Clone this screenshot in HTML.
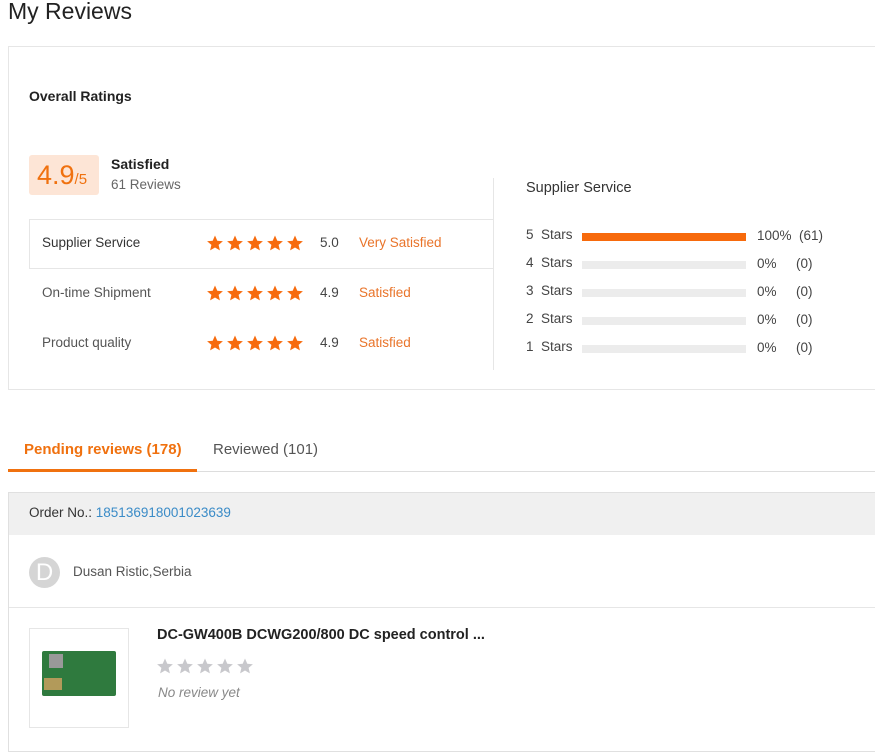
<!DOCTYPE html><html><head><meta charset="utf-8"><style>
*{margin:0;padding:0;box-sizing:border-box}
body{width:875px;height:743px;overflow:hidden;background:#fff;font-family:"Liberation Sans",sans-serif;color:#333;position:relative}
.a{position:absolute;white-space:nowrap}
.bar{position:absolute;left:582px;width:164px;height:8px;background:#ececec}
.r{font-size:13.5px}
</style></head><body>
<div class="a" style="left:8px;top:-2px;font-size:23px;color:#222;line-height:26px">My Reviews</div>
<div class="a" style="left:8px;top:46px;width:880px;height:344px;border:1px solid #e6e6e6"></div>
<div class="a" style="left:29px;top:88px;font-size:14px;font-weight:bold;color:#222">Overall Ratings</div>
<div class="a" style="left:29px;top:155px;width:70px;height:40px;background:#fde5d6;border-radius:3px"></div>
<div class="a" style="left:37px;top:159px;font-size:27px;color:#f0710f;line-height:32px">4.9<span style="font-size:15px">/5</span></div>
<div class="a" style="left:111px;top:156px;font-size:14px;font-weight:bold;color:#222">Satisfied</div>
<div class="a" style="left:111px;top:177px;font-size:13.5px;color:#666">61 Reviews</div>
<div class="a" style="left:493px;top:178px;width:1px;height:192px;background:#e6e6e6"></div>
<div class="a" style="left:29px;top:219px;width:465px;height:50px;border:1px solid #e6e6e6;border-right:none"></div>
<div class="a r" style="left:42px;top:235px;color:#333">Supplier Service</div>
<div class="a r" style="left:42px;top:285px;color:#555">On-time Shipment</div>
<div class="a r" style="left:42px;top:335px;color:#555">Product quality</div>
<div class="a r" style="left:320px;top:235px;color:#444">5.0</div>
<div class="a r" style="left:320px;top:285px;color:#444">4.9</div>
<div class="a r" style="left:320px;top:335px;color:#444">4.9</div>
<div class="a r" style="left:359px;top:235px;color:#e9742a">Very Satisfied</div>
<div class="a r" style="left:359px;top:285px;color:#e9742a">Satisfied</div>
<div class="a r" style="left:359px;top:335px;color:#e9742a">Satisfied</div>
<svg class="a" style="left:207px;top:235px" width="100" height="120" viewBox="0 0 100 120">
<defs><path id="s" d="M8 0.5l2.3 5.2 5.6.5-4.3 3.7 1.3 5.5L8 12.5 3.1 15.4 4.4 9.9 0.1 6.2l5.6-.5z" fill="#f76a0c"/></defs>
<g><use href="#s" x="0"/><use href="#s" x="20"/><use href="#s" x="40"/><use href="#s" x="60"/><use href="#s" x="80"/></g>
<g transform="translate(0,50)"><use href="#s" x="0"/><use href="#s" x="20"/><use href="#s" x="40"/><use href="#s" x="60"/><use href="#s" x="80"/></g>
<g transform="translate(0,100)"><use href="#s" x="0"/><use href="#s" x="20"/><use href="#s" x="40"/><use href="#s" x="60"/><use href="#s" x="80"/></g>
</svg>
<div class="a" style="left:526px;top:180px;font-size:14.5px;color:#333">Supplier Service</div>
<div class="a r" style="left:526px;top:227px;color:#444;line-height:16px">5&nbsp; Stars</div>
<div class="a r" style="left:526px;top:255px;color:#444;line-height:16px">4&nbsp; Stars</div>
<div class="a r" style="left:526px;top:283px;color:#444;line-height:16px">3&nbsp; Stars</div>
<div class="a r" style="left:526px;top:311px;color:#444;line-height:16px">2&nbsp; Stars</div>
<div class="a r" style="left:526px;top:339px;color:#444;line-height:16px">1&nbsp; Stars</div>
<div class="bar" style="top:233px;background:#f76a0c"></div>
<div class="bar" style="top:261px"></div><div class="bar" style="top:289px"></div><div class="bar" style="top:317px"></div><div class="bar" style="top:345px"></div>
<div class="a r" style="left:757px;top:228px;color:#444;line-height:16px">100%&nbsp; (61)</div>
<div class="a r" style="left:757px;top:256px;color:#444;line-height:16px">0%</div><div class="a r" style="left:796px;top:256px;color:#444;line-height:16px">(0)</div>
<div class="a r" style="left:757px;top:284px;color:#444;line-height:16px">0%</div><div class="a r" style="left:796px;top:284px;color:#444;line-height:16px">(0)</div>
<div class="a r" style="left:757px;top:312px;color:#444;line-height:16px">0%</div><div class="a r" style="left:796px;top:312px;color:#444;line-height:16px">(0)</div>
<div class="a r" style="left:757px;top:340px;color:#444;line-height:16px">0%</div><div class="a r" style="left:796px;top:340px;color:#444;line-height:16px">(0)</div>
<div class="a" style="left:8px;top:471px;width:870px;height:1px;background:#ddd"></div>
<div class="a" style="left:8px;top:469px;width:189px;height:3px;background:#f0710f"></div>
<div class="a" style="left:24px;top:441px;font-size:15px;font-weight:bold;color:#f0710f">Pending reviews (178)</div>
<div class="a" style="left:213px;top:441px;font-size:15px;color:#555">Reviewed (101)</div>
<div class="a" style="left:8px;top:492px;width:880px;height:260px;border:1px solid #e0e0e0"></div>
<div class="a" style="left:9px;top:493px;width:870px;height:42px;background:#f0f0f0"></div>
<div class="a r" style="left:29px;top:505px;color:#333">Order No.: <span style="color:#3a8bc7">185136918001023639</span></div>
<div class="a" style="left:29px;top:557px;width:31px;height:31px;border-radius:50%;background:#d5d5d5;color:#fff;font-size:24px;text-align:center;line-height:31px">D</div>
<div class="a r" style="left:73px;top:564px;color:#555">Dusan Ristic,Serbia</div>
<div class="a" style="left:9px;top:607px;width:870px;height:1px;background:#e6e6e6"></div>
<div class="a" style="left:29px;top:628px;width:100px;height:100px;border:1px solid #e6e6e6"></div>
<div class="a" style="left:42px;top:651px;width:74px;height:45px;background:#2f7a3e;border-radius:2px"></div>
<div class="a" style="left:49px;top:654px;width:14px;height:14px;background:#999"></div>
<div class="a" style="left:44px;top:678px;width:18px;height:12px;background:#b29a5a"></div>
<div class="a" style="left:157px;top:627px;font-size:14.5px;font-weight:bold;color:#222">DC-GW400B DCWG200/800 DC speed control ...</div>
<svg class="a" style="left:157px;top:658px" width="100" height="16" viewBox="0 0 100 16">
<defs><path id="g" d="M8 0.5l2.3 5.2 5.6.5-4.3 3.7 1.3 5.5L8 12.5 3.1 15.4 4.4 9.9 0.1 6.2l5.6-.5z" fill="#c8c8cc"/></defs>
<use href="#g" x="0"/><use href="#g" x="20"/><use href="#g" x="40"/><use href="#g" x="60"/><use href="#g" x="80"/></svg>
<div class="a r" style="left:158px;top:685px;font-style:italic;color:#888">No review yet</div>
</body></html>
